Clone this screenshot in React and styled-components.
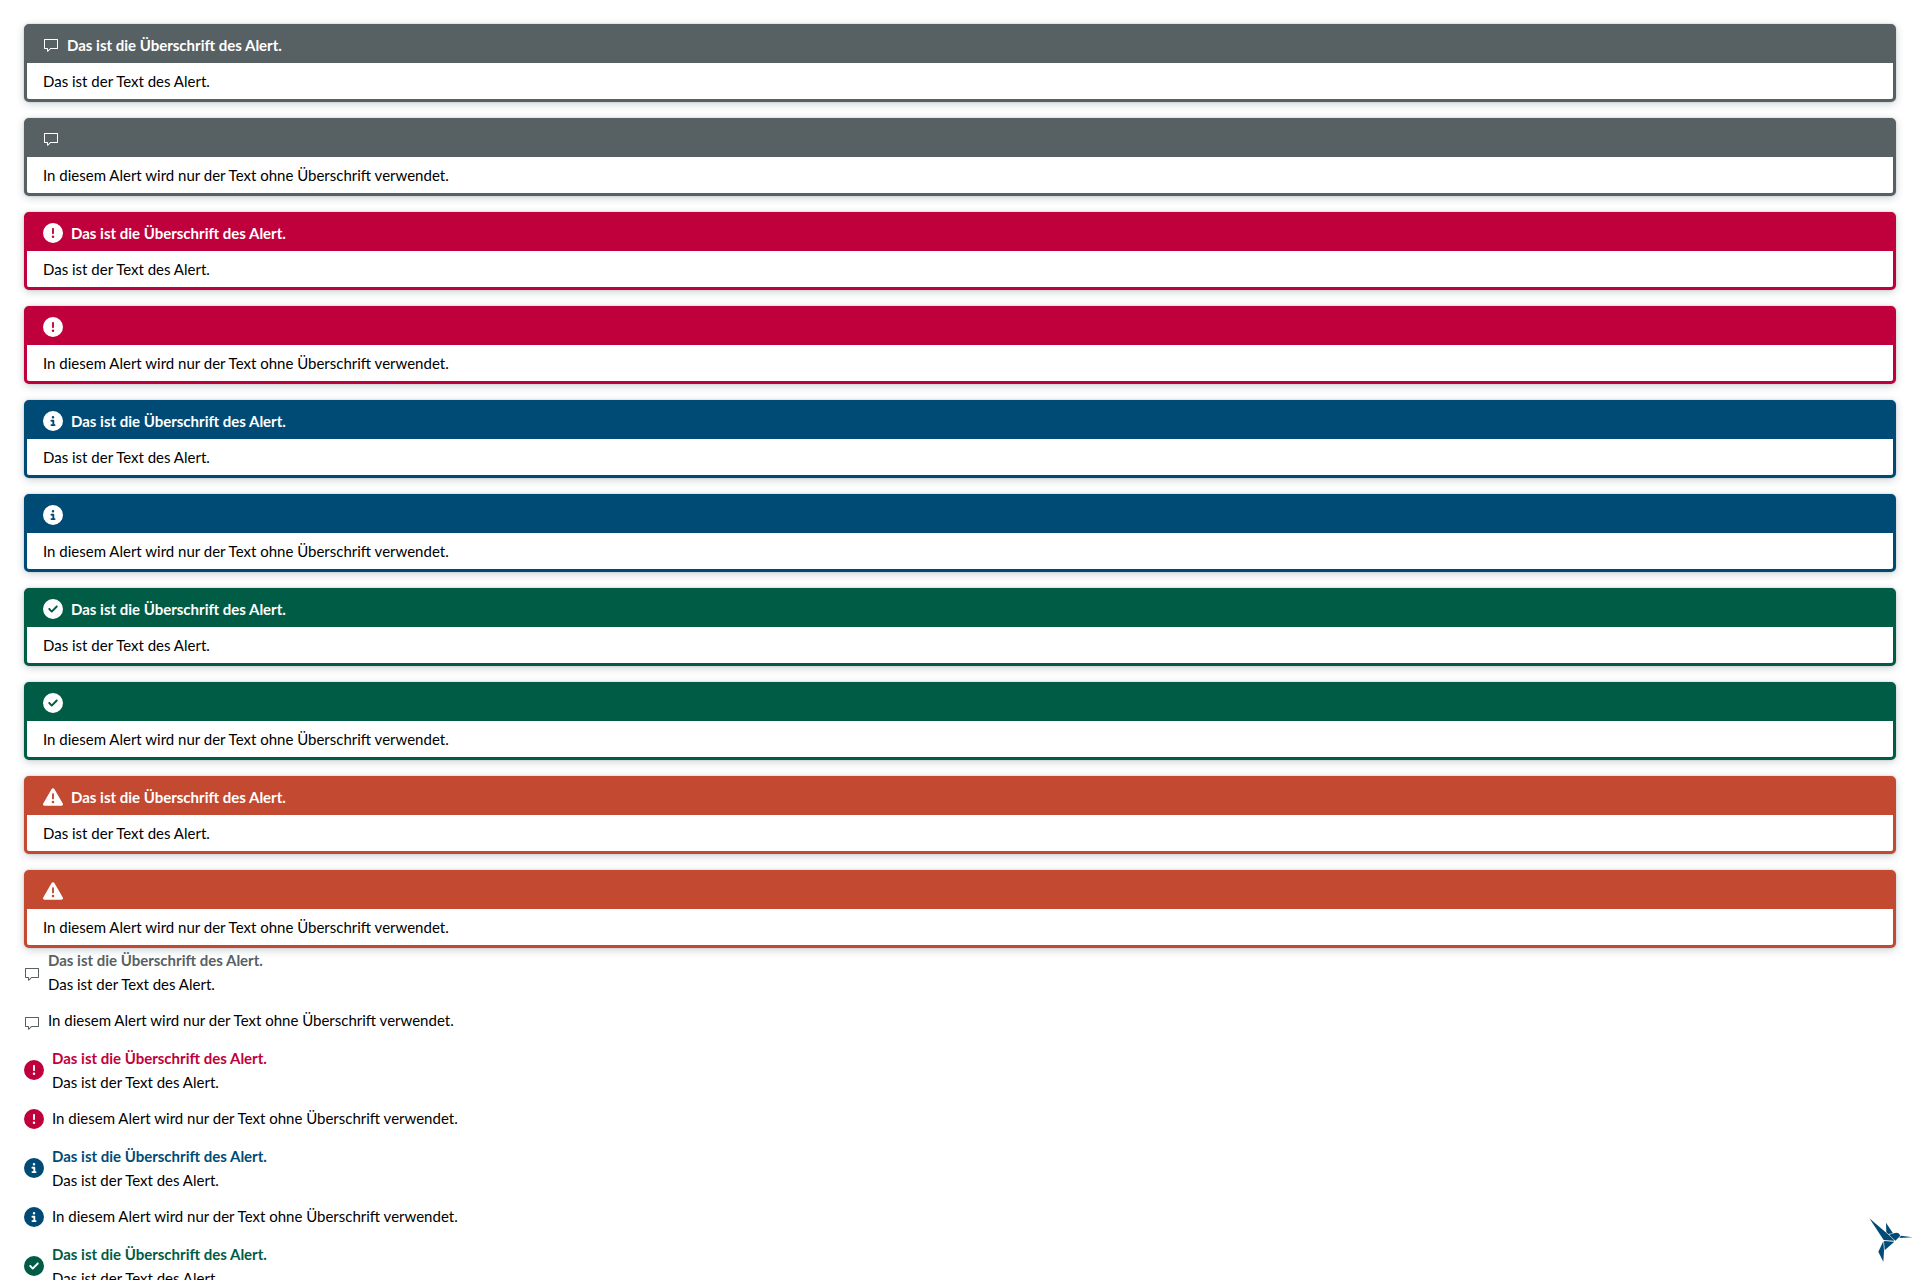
import React from 'react';
import styled, { createGlobalStyle } from 'styled-components';
import {
  FaCircleCheck,
  FaCircleExclamation,
  FaCircleInfo,
  FaTriangleExclamation,
} from 'react-icons/fa6';
import { VscComment } from 'react-icons/vsc';

const GlobalStyle = createGlobalStyle`
  *, *::before, *::after { box-sizing: border-box; }
  html, body { margin: 0; background: #ffffff; }
  body {
    color: #000000;
    font-family: Lato, "Noto Sans", sans-serif;
    font-size: 15px;
    line-height: 24px;
  }
`;

const Page = styled.main`
  height: 100vh;
  overflow-y: auto;
  scrollbar-width: none;
  padding: 24px;
`;

const CardList = styled.section`
  display: grid;
  gap: 16px;
`;

const MessageList = styled.section`
  display: grid;
  gap: 12px;
`;

const Card = styled.article`
  border: 3px solid ${(p) => p.$color};
  border-radius: 5px;
  background: ${(p) => p.$color};
  box-shadow: 0 0 2px rgba(8, 35, 48, 0.2), 0 2px 8px rgba(8, 35, 48, 0.2);
`;

const CardHeader = styled.header`
  display: flex;
  align-items: center;
  gap: 8px;
  min-height: 36px;
  padding: 6px 16px;
  color: #ffffff;
`;

const CardBody = styled.div`
  padding: 6px 16px;
  border-radius: 0 0 2px 2px;
  background: #ffffff;
`;

const Heading = styled.h2`
  margin: 0;
  color: ${(p) => p.$color || 'inherit'};
  font-size: inherit;
  font-weight: 700;
`;

const Text = styled.p`
  margin: 0;
`;

const Message = styled.article`
  display: flex;
  gap: 8px;
  min-height: 26px;
`;

const IconSlot = styled.span`
  display: flex;
  flex: none;
  align-self: center;
  color: ${(p) => p.$color || 'inherit'};
  font-size: ${(p) => p.$size}px;
  padding-top: ${(p) => (p.$low ? 4 : 0)}px;
`;

const Logo = styled.svg`
  position: fixed;
  right: 6px;
  bottom: 16px;
  width: 48px;
  height: 48px;
  fill: #004b76;
`;

const KINDS = [
  { id: 'default', color: '#576164', Icon: VscComment, size: 16 },
  { id: 'error', color: '#c0003c', Icon: FaCircleExclamation, size: 20 },
  { id: 'info', color: '#004b76', Icon: FaCircleInfo, size: 20 },
  { id: 'success', color: '#005c45', Icon: FaCircleCheck, size: 20 },
  { id: 'warning', color: '#c44931', Icon: FaTriangleExclamation, size: 20 },
];

const ALERTS = KINDS.flatMap((kind) => [
  {
    ...kind,
    key: `${kind.id}-heading`,
    heading: 'Das ist die Überschrift des Alert.',
    text: 'Das ist der Text des Alert.',
  },
  {
    ...kind,
    key: `${kind.id}-text`,
    text: 'In diesem Alert wird nur der Text ohne Überschrift verwendet.',
  },
]);

function CardAlert({ color, Icon, size, heading, text }) {
  return (
    <Card $color={color}>
      <CardHeader>
        <IconSlot $size={size}>
          <Icon aria-hidden="true" />
        </IconSlot>
        {heading && <Heading>{heading}</Heading>}
      </CardHeader>
      <CardBody>
        <Text>{text}</Text>
      </CardBody>
    </Card>
  );
}

function MessageAlert({ id, color, Icon, size, heading, text }) {
  return (
    <Message>
      <IconSlot $size={size} $color={color} $low={id === 'default'}>
        <Icon aria-hidden="true" />
      </IconSlot>
      <div>
        {heading && <Heading $color={color}>{heading}</Heading>}
        <Text>{text}</Text>
      </div>
    </Message>
  );
}

function Hummingbird() {
  return (
    <Logo viewBox="78 78 144 144" aria-hidden="true">
      <path d="M88 85 L144 133 L164 152 L131 150 Z" />
      <path d="M138 98 L159 130 L145 132 L139 127 Z" />
      <path d="M147 134 L162 130 Q168 126 176 130 L181 137 L166 152 Z" />
      <path d="M183 137 L218 142 L178 144 Z" />
      <path d="M132 153 L163 155 L134 181 Z" />
      <path d="M130 154 L132 182 L130 215 L115 185 Z" />
    </Logo>
  );
}

export default function App() {
  return (
    <>
      <GlobalStyle />
      <Page>
        <CardList>
          {ALERTS.map(({ key, ...alert }) => (
            <CardAlert key={key} {...alert} />
          ))}
        </CardList>
        <MessageList>
          {ALERTS.map(({ key, ...alert }) => (
            <MessageAlert key={key} {...alert} />
          ))}
        </MessageList>
      </Page>
      <Hummingbird />
    </>
  );
}
